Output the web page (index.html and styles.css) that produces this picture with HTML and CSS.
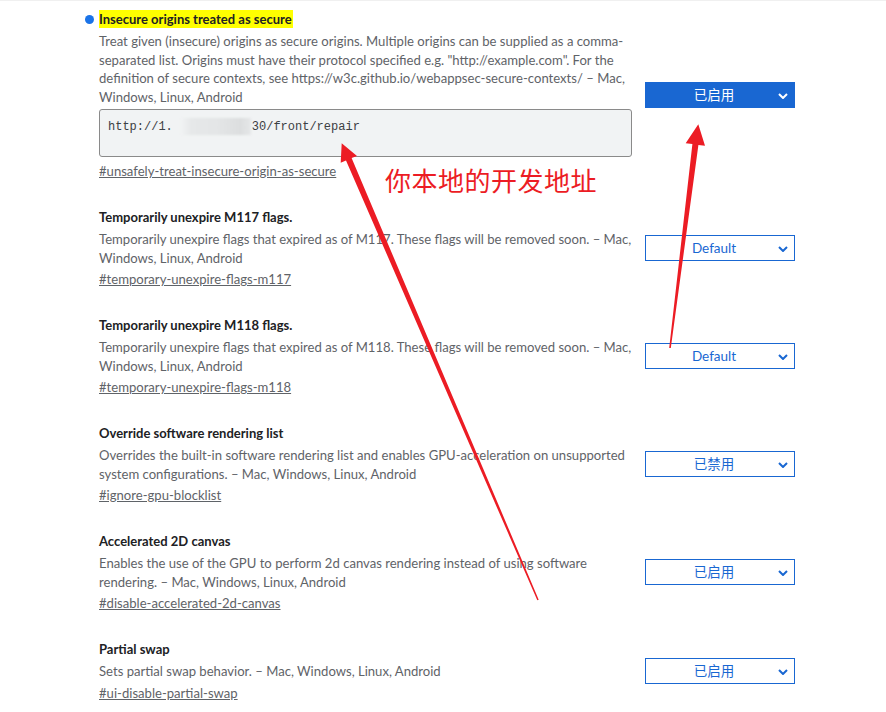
FILE: index.html
```html
<!DOCTYPE html>
<html lang="zh-CN">
<head>
<meta charset="utf-8">
<title>Flags</title>
<link rel="stylesheet" href="styles.css">
</head>
<body>
<div class="topline"></div>
<main class="page">
  <section class="flag">
    <div class="info">
      <h3 class="name modified"><span class="dot"></span><span class="hl">Insecure origins treated as secure</span></h3>
      <p class="desc">Treat given (insecure) origins as secure origins. Multiple origins can be supplied as a comma-separated list. Origins must have their protocol specified e.g. "http://example.com". For the definition of secure contexts, see https://w3c.github.io/webappsec-secure-contexts/ – Mac, Windows, Linux, Android</p>
      <div class="textarea"><span>http://1.</span><span class="mask"></span><span>30/front/repair</span></div>
      <a class="link first" href="#">#unsafely-treat-insecure-origin-as-secure</a>
    </div>
    <div class="select on">已启用<svg class="chev" viewBox="0 0 10 6" width="10" height="6"><path d="M1 1 L5 5 L9 1" fill="none" stroke="currentColor" stroke-width="2"/></svg></div>
  </section>

  <section class="flag">
    <div class="info">
      <h3 class="name">Temporarily unexpire M117 flags.</h3>
      <p class="desc">Temporarily unexpire flags that expired as of M117. These flags will be removed soon. – Mac, Windows, Linux, Android</p>
      <a class="link" href="#">#temporary-unexpire-flags-m117</a>
    </div>
    <div class="select">Default<svg class="chev" viewBox="0 0 10 6" width="10" height="6"><path d="M1 1 L5 5 L9 1" fill="none" stroke="currentColor" stroke-width="2"/></svg></div>
  </section>

  <section class="flag">
    <div class="info">
      <h3 class="name">Temporarily unexpire M118 flags.</h3>
      <p class="desc">Temporarily unexpire flags that expired as of M118. These flags will be removed soon. – Mac, Windows, Linux, Android</p>
      <a class="link" href="#">#temporary-unexpire-flags-m118</a>
    </div>
    <div class="select">Default<svg class="chev" viewBox="0 0 10 6" width="10" height="6"><path d="M1 1 L5 5 L9 1" fill="none" stroke="currentColor" stroke-width="2"/></svg></div>
  </section>

  <section class="flag">
    <div class="info">
      <h3 class="name">Override software rendering list</h3>
      <p class="desc">Overrides the built-in software rendering list and enables GPU-acceleration on unsupported system configurations. – Mac, Windows, Linux, Android</p>
      <a class="link" href="#">#ignore-gpu-blocklist</a>
    </div>
    <div class="select">已禁用<svg class="chev" viewBox="0 0 10 6" width="10" height="6"><path d="M1 1 L5 5 L9 1" fill="none" stroke="currentColor" stroke-width="2"/></svg></div>
  </section>

  <section class="flag">
    <div class="info">
      <h3 class="name">Accelerated 2D canvas</h3>
      <p class="desc">Enables the use of the GPU to perform 2d canvas rendering instead of using software rendering. – Mac, Windows, Linux, Android</p>
      <a class="link" href="#">#disable-accelerated-2d-canvas</a>
    </div>
    <div class="select">已启用<svg class="chev" viewBox="0 0 10 6" width="10" height="6"><path d="M1 1 L5 5 L9 1" fill="none" stroke="currentColor" stroke-width="2"/></svg></div>
  </section>

  <section class="flag">
    <div class="info">
      <h3 class="name">Partial swap</h3>
      <p class="desc">Sets partial swap behavior. – Mac, Windows, Linux, Android</p>
      <a class="link" href="#">#ui-disable-partial-swap</a>
    </div>
    <div class="select">已启用<svg class="chev" viewBox="0 0 10 6" width="10" height="6"><path d="M1 1 L5 5 L9 1" fill="none" stroke="currentColor" stroke-width="2"/></svg></div>
  </section>
</main>

<div class="note">你本地的开发地址</div>
<svg class="arrows" width="886" height="712" viewBox="0 0 886 712">
  <polygon fill="#ec1c24" points="341.7,143.3 357,156 351.6,158.1 538.7,599.7 537.3,600.3 346,160.5 340.7,162.7" />
  <polygon fill="#ec1c24" points="698.3,124.3 705,145.7 698.4,144.9 670.8,348.1 669.2,347.9 692.4,144.1 685.7,143.3" />
</svg>
</body>
</html>
```

FILE: styles.css
```css
* { box-sizing: border-box; }
html, body { margin: 0; padding: 0; background: #fff; }
body {
  font-family: "Lato", "Noto Sans CJK SC", sans-serif;
  color: #5f6368;
  width: 886px;
  height: 712px;
  overflow: hidden;
  position: relative;
}
.topline { height: 1px; background: #f0f0f0; }
.page {
  padding: 8px 0 0 99px;
}
.flag {
  display: flex;
  align-items: center;
  gap: 11px;
  margin-bottom: 26px;
}
.info { width: 535px; }
.name {
  position: relative;
  margin: 0 0 3px;
  font-size: 13px;
  font-weight: 700;
  line-height: 20px;
  color: #202124;
}
.hl { background: #ffff00; padding: 1px 1px 1px 0; }
.dot {
  position: absolute;
  left: -14px;
  top: 6px;
  width: 9px;
  height: 9px;
  border-radius: 50%;
  background: #1a73e8;
}
.desc {
  margin: 0;
  font-size: 13.1px;
  line-height: 18.5px;
}
.textarea {
  margin-top: 3px;
  width: 533px;
  height: 48px;
  border: 1px solid #8a8a8a;
  border-radius: 3px;
  background: #f1f3f4;
  padding: 8px 8px;
  font-family: "Liberation Mono", monospace;
  font-size: 12px;
  color: #3c4043;
  display: flex;
  align-items: flex-start;
  line-height: 18px;
}
.mask {
  width: 70px;
  height: 17px;
  margin: 0 1px 0 8px;
  background: linear-gradient(90deg, #f1f3f4 0%, #e6e8e9 15%, #e4e6e7 50%, #dcdedf 85%, #e6e8e9 100%);
  filter: blur(1px);
}
.link {
  display: inline-block;
  margin-top: 2px;
  font-size: 13.1px;
  line-height: 20px;
  color: #5f6368;
  text-decoration: underline;
}
.link.first { margin-top: 4px; }
.select {
  position: relative;
  width: 150px;
  height: 26px;
  border: 1px solid #1967d2;
  color: #1967d2;
  background: #fff;
  font-size: 13.5px;
  line-height: 24px;
  text-align: center;
  padding-right: 12px;
}
.select.on { background: #1967d2; color: #fff; }
.chev {
  position: absolute;
  right: 6px;
  top: 10px;
}
.note {
  position: absolute;
  left: 385px;
  top: 163px;
  font-family: "Noto Sans CJK SC", sans-serif;
  font-size: 26px;
  line-height: 34px;
  color: #ec1c24;
  letter-spacing: 0.5px;
}
.arrows {
  position: absolute;
  left: 0;
  top: 0;
  pointer-events: none;
}
```
